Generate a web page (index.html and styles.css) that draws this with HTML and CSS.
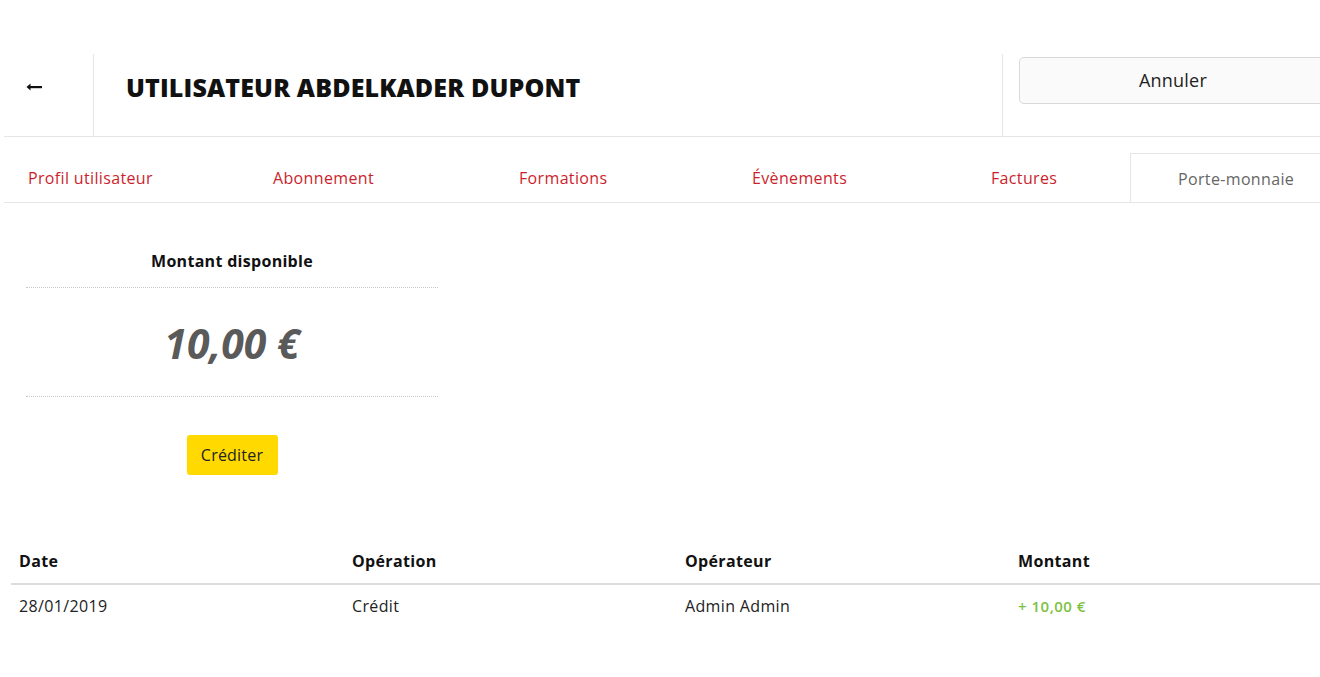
FILE: index.html
```html
<!DOCTYPE html>
<html lang="fr">
<head>
<meta charset="utf-8">
<title>Utilisateur Abdelkader Dupont</title>
<link rel="stylesheet" href="styles.css">
</head>
<body>
<div class="page">
  <header class="top">
    <a class="back" href="#" aria-label="Retour">
      <svg width="16" height="8" viewBox="0 0 16 8"><path d="M4.5 0.5 L0.5 4 L4.5 7.5 Z" fill="#111"/><rect x="3" y="3" width="13" height="2.2" fill="#111"/></svg>
    </a>
    <h1 class="title">UTILISATEUR ABDELKADER DUPONT</h1>
    <div class="actions"><button class="btn-cancel">Annuler</button></div>
  </header>
  <nav class="tabs">
    <a class="tab" href="#">Profil utilisateur</a>
    <a class="tab" href="#">Abonnement</a>
    <a class="tab" href="#">Formations</a>
    <a class="tab" href="#">Évènements</a>
    <a class="tab" href="#">Factures</a>
    <a class="tab active" href="#">Porte-monnaie</a>
  </nav>
  <section class="balance">
    <h2 class="balance-label">Montant disponible</h2>
    <div class="balance-amount">10,00 €</div>
    <div class="balance-action"><button class="btn-credit">Créditer</button></div>
  </section>
  <table class="ops">
    <thead>
      <tr><th>Date</th><th>Opération</th><th>Opérateur</th><th>Montant</th></tr>
    </thead>
    <tbody>
      <tr><td>28/01/2019</td><td>Crédit</td><td>Admin Admin</td><td class="plus">+ 10,00 €</td></tr>
    </tbody>
  </table>
</div>
</body>
</html>
```
FILE: styles.css
```css
html, body {
  margin: 0;
  padding: 0;
  overflow: hidden;
  background: #fff;
}
body {
  font-family: "Open Sans", "Liberation Sans", sans-serif;
  color: #222;
}
.page {
  width: 1360px;
  margin-left: 4px;
}
.top {
  display: flex;
  height: 82px;
  margin-top: 54px;
  border-bottom: 1px solid #e6e6e6;
}
.back {
  flex: 0 0 90px;
  box-sizing: border-box;
  border-right: 1px solid #e6e6e6;
  display: flex;
  align-items: center;
  padding: 0 0 17px 22px;
}
.back svg { display: block; }
.title {
  flex: 0 0 908px;
  margin: 0;
  padding: 0 0 16px 32px;
  box-sizing: border-box;
  font-size: 25px;
  font-weight: 800;
  color: #111;
  display: flex;
  align-items: center;
  letter-spacing: 0.15px;
}
.actions {
  border-left: 1px solid #e6e6e6;
  padding: 3px 0 0 16px;
}
.btn-cancel {
  width: 308px;
  height: 47px;
  border: 1px solid #d9d9d9;
  border-radius: 5px;
  background: #fafafa;
  font-family: inherit;
  font-size: 18px;
  letter-spacing: 0.2px;
  color: #222;
  padding: 0 0 1px;
}
.tabs {
  display: flex;
  padding-top: 16px;
  border-bottom: 1px solid #e6e6e6;
  height: 49px;
}
.tab {
  flex-shrink: 0;
  display: flex;
  align-items: center;
  padding-left: 24px;
  box-sizing: border-box;
  font-size: 16px;
  letter-spacing: 0.35px;
  color: #cc1f2d;
  text-decoration: none;
  white-space: nowrap;
}
.tab:nth-child(1) { width: 245px; }
.tab:nth-child(2) { width: 246px; }
.tab:nth-child(3) { width: 233px; }
.tab:nth-child(4) { width: 239px; }
.tab:nth-child(5) { width: 163px; }
.tab.active {
  padding: 1px 60px 0 47px;
  color: #666;
  background: #fff;
  border: 1px solid #e6e6e6;
  border-bottom: none;
  height: 49px;
  margin-bottom: -1px;
}
.balance {
  width: 412px;
  margin: 47px 0 0 22px;
  text-align: center;
}
.balance-label {
  margin: 0;
  font-size: 16px;
  line-height: 22px;
  font-weight: 700;
  letter-spacing: 0.3px;
  color: #111;
  padding-bottom: 15px;
  border-bottom: 1px dotted #c8c8c8;
}
.balance-amount {
  font-size: 41px;
  line-height: 54px;
  font-weight: 700;
  font-style: italic;
  color: #5a5a5a;
  padding: 28px 0 26px;
  border-bottom: 1px dotted #c8c8c8;
}
.balance-action {
  padding-top: 38px;
}
.btn-credit {
  width: 91px;
  height: 40px;
  border: none;
  border-radius: 3px;
  background: #ffd900;
  font-family: inherit;
  font-size: 16px;
  letter-spacing: 0.2px;
  color: #222;
  padding: 0;
}
.ops {
  width: 1332px;
  margin: 67px 0 0 7px;
  border-collapse: collapse;
  table-layout: fixed;
}
.ops th, .ops td {
  text-align: left;
  font-size: 16px;
  line-height: 22px;
  letter-spacing: 0.35px;
  padding: 8px 8px 11px;
}
.ops th {
  font-weight: 700;
  color: #111;
  border-bottom: 2px solid #ddd;
}
.ops td {
  padding-top: 10px;
  color: #222;
}
.ops td.plus {
  color: #7dc242;
  font-size: 15px;
  font-weight: 600;
  letter-spacing: 0.5px;
}
```
